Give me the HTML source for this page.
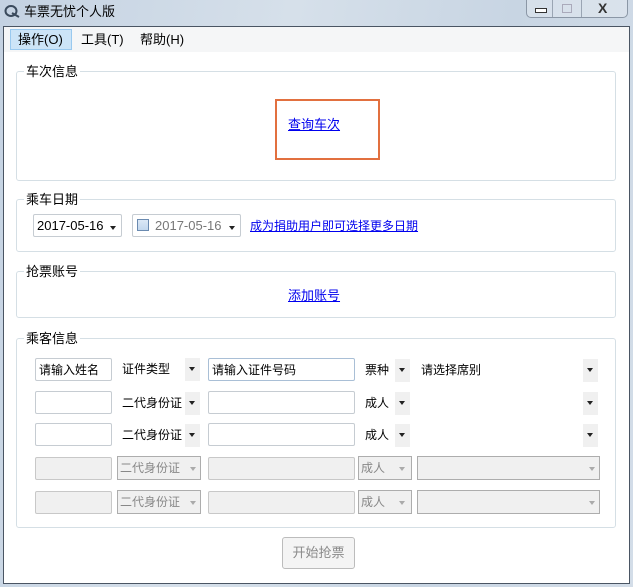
<!DOCTYPE html>
<html><head><meta charset="utf-8"><style>
*{margin:0;padding:0;box-sizing:border-box}
body{width:633px;height:587px;overflow:hidden;background:linear-gradient(100deg,#c4d2e2 0%,#d6e0ea 40%,#c8d5e3 70%,#d3dde8 100%);font-family:"Liberation Sans","Noto Sans CJK SC",sans-serif;font-size:12px;line-height:16px;color:#000;position:relative}
.a{position:absolute}
.client{left:3px;top:26px;width:627px;height:558px;background:#fff;border:1px solid #4a5563}
.menu{left:4px;top:27px;width:625px;height:25px;background:#f5f6f7}
.grp{border:1px solid #d5dfe5;border-radius:3px}
.gt{background:#fff;padding:0 2px;font-size:13px}
.in{border:1px solid #c6ccd2;border-radius:2px;background:#fff;height:23px;padding:3px 3px;font-size:12px}
.btn{background:#f0f0f0;width:15px;height:23px}
.btn:after,.tri:after{content:"";position:absolute;left:4px;top:9px;border:3px solid transparent;border-top:4px solid #222}
.dis{border:1px solid #adadad;background:#f0f0f0;height:24px;color:#888;font-size:12px;padding:3px 2px}
.dis2{border:1px solid #c8c8c8;border-radius:2px;background:#f0f0f0;height:23px}
.tri{width:10px;height:20px}
.tri.g:after{border-top-color:#aaa}
.l{font-size:12px}
a{color:#0000ee;text-decoration:underline;font-size:12px}
</style></head><body>
<svg class="a" style="left:4px;top:4px" width="16" height="14" viewBox="0 0 16 14"><ellipse cx="7" cy="7" rx="5.5" ry="5" fill="none" stroke="#3a4a5c" stroke-width="2"/><path d="M8 9 L15 13" stroke="#3a4a5c" stroke-width="2"/></svg>
<div class="a" style="left:24px;top:4px;font-size:13px">车票无忧个人版</div>
<div class="a" style="left:526px;top:-2px;width:102px;height:20px;border:1px solid #8b97a6;border-radius:0 0 5px 5px;background:rgba(255,255,255,.25)"></div>
<div class="a" style="left:552px;top:0;width:1px;height:17px;background:#9aa5b3"></div>
<div class="a" style="left:581px;top:0;width:1px;height:17px;background:#9aa5b3"></div>
<div class="a" style="left:535px;top:8px;width:12px;height:5px;border:1px solid #333;background:#fff"></div>
<div class="a" style="left:562px;top:4px;width:10px;height:9px;border:1px solid #aab;"></div>
<div class="a" style="left:598px;top:0px;font-size:14px;color:#333;font-weight:bold">X</div>
<div class="a client"></div>
<div class="a menu"></div>
<div class="a" style="left:10px;top:29px;width:62px;height:21px;background:#cce4f7;border:1px solid #99c9ef"></div>
<div class="a" style="left:18px;top:32px;font-size:13px">操作(O)</div>
<div class="a" style="left:81px;top:32px;font-size:13px">工具(T)</div>
<div class="a" style="left:140px;top:32px;font-size:13px">帮助(H)</div>

<div class="a grp" style="left:16px;top:71px;width:600px;height:110px"></div>
<div class="a gt" style="left:24px;top:64px">车次信息</div>
<div class="a" style="left:275px;top:99px;width:105px;height:61px;border:2px solid #e2703f"></div>
<a class="a" style="left:288px;top:117px;font-size:13px">查询车次</a>

<div class="a grp" style="left:16px;top:199px;width:600px;height:53px"></div>
<div class="a gt" style="left:24px;top:192px">乘车日期</div>
<div class="a in" style="left:33px;top:214px;width:89px;color:#000;font-size:13px">2017-05-16</div>
<div class="a tri" style="left:106px;top:217px"></div>
<div class="a in" style="left:132px;top:214px;width:109px;color:#777;padding-left:22px;font-size:13px">2017-05-16</div>
<div class="a" style="left:137px;top:219px;width:12px;height:12px;border:1px solid #6a8ab0;background:linear-gradient(#dbe8f6,#c2d7ee)"></div>
<div class="a tri" style="left:225px;top:217px"></div>
<a class="a" style="left:250px;top:218px">成为捐助用户即可选择更多日期</a>

<div class="a grp" style="left:16px;top:271px;width:600px;height:47px"></div>
<div class="a gt" style="left:24px;top:264px">抢票账号</div>
<a class="a" style="left:288px;top:288px;font-size:13px">添加账号</a>

<div class="a grp" style="left:16px;top:338px;width:600px;height:190px"></div>
<div class="a gt" style="left:24px;top:331px">乘客信息</div>

<div class="a in" style="left:35px;top:358px;width:77px">请输入姓名</div>
<div class="a l" style="left:122px;top:361px">证件类型</div>
<div class="a btn" style="left:185px;top:358px"></div>
<div class="a in" style="left:208px;top:358px;width:147px;border-color:#a9bfd6">请输入证件号码</div>
<div class="a l" style="left:365px;top:362px">票种</div>
<div class="a btn" style="left:395px;top:359px"></div>
<div class="a l" style="left:421px;top:362px">请选择席别</div>
<div class="a btn" style="left:583px;top:359px"></div>

<div class="a in" style="left:35px;top:391px;width:77px"></div>
<div class="a l" style="left:122px;top:395px">二代身份证</div>
<div class="a btn" style="left:185px;top:392px"></div>
<div class="a in" style="left:208px;top:391px;width:147px"></div>
<div class="a l" style="left:365px;top:395px">成人</div>
<div class="a btn" style="left:395px;top:392px"></div>
<div class="a btn" style="left:583px;top:392px"></div>

<div class="a in" style="left:35px;top:423px;width:77px"></div>
<div class="a l" style="left:122px;top:427px">二代身份证</div>
<div class="a btn" style="left:185px;top:424px"></div>
<div class="a in" style="left:208px;top:423px;width:147px"></div>
<div class="a l" style="left:365px;top:427px">成人</div>
<div class="a btn" style="left:395px;top:424px"></div>
<div class="a btn" style="left:583px;top:424px"></div>

<div class="a dis2" style="left:35px;top:457px;width:77px"></div>
<div class="a dis" style="left:117px;top:456px;width:84px">二代身份证</div>
<div class="a tri g" style="left:186px;top:458px"></div>
<div class="a dis2" style="left:208px;top:457px;width:147px"></div>
<div class="a dis" style="left:358px;top:456px;width:54px">成人</div>
<div class="a tri g" style="left:395px;top:458px"></div>
<div class="a dis" style="left:417px;top:456px;width:183px"></div>
<div class="a tri g" style="left:585px;top:458px"></div>

<div class="a dis2" style="left:35px;top:491px;width:77px"></div>
<div class="a dis" style="left:117px;top:490px;width:84px">二代身份证</div>
<div class="a tri g" style="left:186px;top:492px"></div>
<div class="a dis2" style="left:208px;top:491px;width:147px"></div>
<div class="a dis" style="left:358px;top:490px;width:54px">成人</div>
<div class="a tri g" style="left:395px;top:492px"></div>
<div class="a dis" style="left:417px;top:490px;width:183px"></div>
<div class="a tri g" style="left:585px;top:492px"></div>

<div class="a" style="left:282px;top:537px;width:73px;height:32px;border:1px solid #bcbcbc;border-radius:3px;background:#f4f4f4;color:#8a8a8a;font-size:13px;text-align:center;line-height:29px">开始抢票</div>
</body></html>
